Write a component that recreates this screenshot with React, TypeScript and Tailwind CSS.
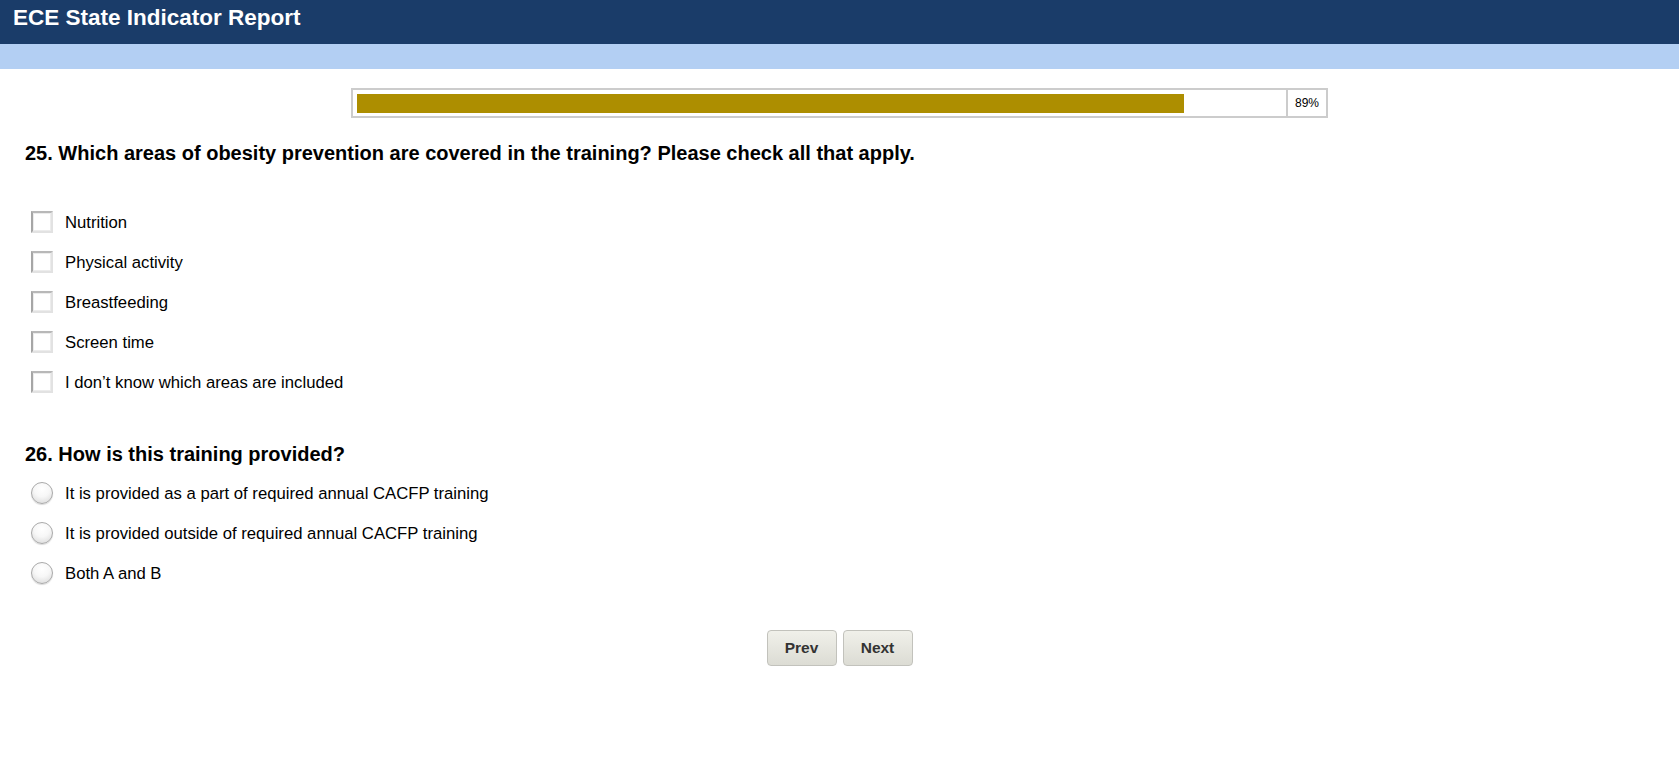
import React from "react";

const checks = [
  "Nutrition",
  "Physical activity",
  "Breastfeeding",
  "Screen time",
  "I don\u2019t know which areas are included",
];

const radios = [
  "It is provided as a part of required annual CACFP training",
  "It is provided outside of required annual CACFP training",
  "Both A and B",
];

function CheckBox() {
  return (
    <span className="flex h-[22px] w-[22px] shrink-0 border-2 border-t-[#b8b8b8] border-l-[#a6a6a6] border-r-[#e2e2e2] border-b-[#e2e2e2] bg-white">
      <span className="h-full w-full border border-[#ececec] bg-white" />
    </span>
  );
}

function Radio() {
  return (
    <span className="block h-[22px] w-[22px] shrink-0 rounded-full border border-[#aaaaaa] bg-[radial-gradient(circle_at_50%_30%,#ffffff_0%,#f7f7f7_45%,#d6d6d6_100%)] shadow-[0_1px_1px_rgba(0,0,0,0.15)]" />
  );
}

export default function App() {
  return (
    <div className="min-h-[769px] bg-white font-['Liberation_Sans',Arial,sans-serif] text-black">
      <div className="h-[44px] bg-[#1a3c69] pl-[13px] pt-[5px]">
        <h1 className="text-[22.5px] font-bold leading-[26px] text-white">ECE State Indicator Report</h1>
      </div>
      <div className="h-[25px] bg-[#b3cff3]" />

      <div className="flex justify-center pt-[19px]">
        <div className="flex h-[30px] w-[977px] border-2 border-[#cccccc]">
          <div className="flex flex-1 items-center pl-[4px]">
            <div className="h-[19px] w-[827px] bg-[#ad8e00]" />
          </div>
          <div className="flex w-[40px] items-center justify-center border-l-2 border-[#cccccc] text-[12px]">
            89%
          </div>
        </div>
      </div>

      <div className="pl-[25px] pt-[23px]">
        <h2 className="text-[20px] font-bold leading-[24px]">
          25. Which areas of obesity prevention are covered in the training? Please check all that apply.
        </h2>
        <div className="mt-[46px] flex flex-col gap-[18px] pl-[6px]">
          {checks.map((c) => (
            <label key={c} className="flex h-[22px] items-center gap-[12px]">
              <CheckBox />
              <span className="pt-[2px] text-[16.7px]">{c}</span>
            </label>
          ))}
        </div>

        <h2 className="mt-[49px] text-[20px] font-bold leading-[24px]">26. How is this training provided?</h2>
        <div className="mt-[16px] flex flex-col gap-[18px] pl-[6px]">
          {radios.map((c) => (
            <label key={c} className="flex h-[22px] items-center gap-[12px]">
              <Radio />
              <span className="pt-[2px] text-[16.7px]">{c}</span>
            </label>
          ))}
        </div>
      </div>

      <div className="mt-[46px] flex justify-center gap-[6px]">
        <button className="h-[36px] w-[70px] rounded-[4px] border border-[#c2c2bc] bg-[linear-gradient(#f0f0ea,#dcdcd4)] text-[15.5px] font-bold text-[#333333]">
          Prev
        </button>
        <button className="h-[36px] w-[70px] rounded-[4px] border border-[#c2c2bc] bg-[linear-gradient(#f0f0ea,#dcdcd4)] text-[15.5px] font-bold text-[#333333]">
          Next
        </button>
      </div>
    </div>
  );
}
